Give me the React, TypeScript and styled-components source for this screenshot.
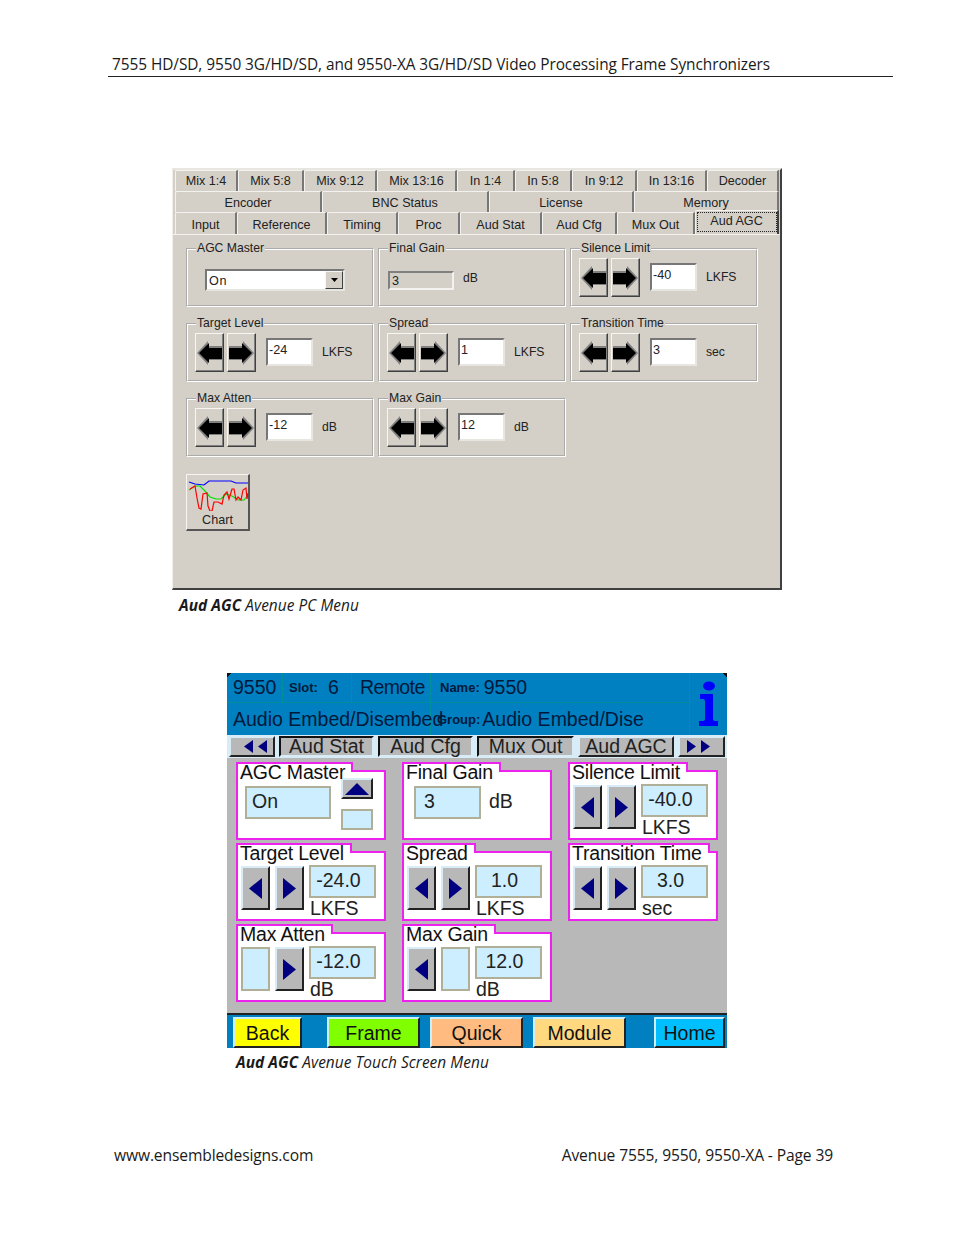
import React from 'react';
import styled, { createGlobalStyle } from 'styled-components';

const GlobalStyle = createGlobalStyle`
  html, body {
    margin: 0;
    background: #fff;
  }
`;

const Page = styled.div`
  width: 954px;
  height: 1235px;
  overflow: hidden;
  font-family: 'Open Sans', 'Noto Sans', sans-serif;
  color: #1a1a1a;
`;

const RunningHead = styled.div`
  width: 781px;
  height: 76px;
  margin-left: 108px;
  padding-left: 4px;
  border-bottom: 1px solid #222;
  display: flex;
  align-items: flex-end;
  font-size: 15.4px;
  line-height: 22px;
  letter-spacing: -0.06px;
`;

const Caption = styled.div<{ $left: number; $top: number }>`
  margin-left: ${(p) => p.$left}px;
  margin-top: ${(p) => p.$top}px;
  height: 20px;
  font-size: 15.4px;
  line-height: 20px;
  font-style: italic;
  letter-spacing: 0.06px;
  b {
    font-weight: 700;
  }
`;

const Footer = styled.div`
  margin: 72px 0 0 114px;
  width: 719px;
  display: flex;
  justify-content: space-between;
  font-size: 15.6px;
  line-height: 20px;
  letter-spacing: -0.12px;
`;

/* ---------- PC menu ---------- */

const PcPanel = styled.div`
  width: 610px;
  height: 422px;
  margin: 91px 0 0 172px;
  box-sizing: border-box;
  background: #d4d0c8;
  border-top: 2px solid #e8e6e0;
  border-left: 1px solid #f0eee8;
  border-right: 2px solid #404040;
  border-bottom: 2px solid #404040;
  font-family: 'Liberation Sans', Arial, sans-serif;
  font-size: 12.6px;
  color: #222;
`;

const PcTabRow = styled.div<{ $h: number }>`
  display: flex;
  height: ${(p) => p.$h}px;
  padding-left: 2px;
`;

const PcTab = styled.div<{ $w: number; $nudge?: boolean; $active?: boolean }>`
  width: ${(p) => p.$w}px;
  box-sizing: border-box;
  background: #d4d0c8;
  border-top: 1px solid #f4f2ee;
  border-left: 1px solid #f4f2ee;
  border-right: 2px solid #777;
  border-top-left-radius: 2px;
  display: flex;
  align-items: center;
  justify-content: center;
  line-height: 20px;
  padding-top: ${(p) => (p.$nudge ? 2 : 0)}px;
  ${(p) =>
    p.$active &&
    `
    height: 24px;
    margin-top: -2px;
    align-items: flex-start;
    padding-top: 2px;
    border-right-color: #404040;
    span {
      outline: 1px dotted #222;
      width: ${p.$w - 6}px;
      height: 18px;
      text-align: center;
      line-height: 17px;
    }
  `}
`;

const PcBody = styled.div`
  border-top: 1px solid #f4f2ee;
  padding: 6px 0 0 13px;
`;

const PcGrid = styled.div`
  display: grid;
  grid-template-columns: repeat(3, 188px);
  grid-auto-rows: 66px;
  column-gap: 4px;
  row-gap: 9px;
`;

const PcGroup = styled.fieldset`
  margin: 0;
  min-width: 0;
  box-sizing: border-box;
  padding: 2px 0 0 7px;
  border: 2px groove #ffffff;
  display: flex;
  align-items: flex-start;
`;

const PcLegend = styled.legend`
  margin-left: 1px;
  padding: 0 1px;
  line-height: 15px;
  font-size: 12.2px;
  white-space: nowrap;
`;

const ArrowButton = styled.div`
  width: 29px;
  height: 39px;
  box-sizing: border-box;
  margin-right: 3px;
  background: #d4d0c8;
  border-top: 1px solid #f8f6f2;
  border-left: 1px solid #f8f6f2;
  border-right: 1px solid #404040;
  border-bottom: 1px solid #404040;
  box-shadow: inset -1px -1px 0 #808080;
  display: flex;
  align-items: center;
  justify-content: center;
`;

const PcInput = styled.div`
  width: 47px;
  height: 28px;
  margin: 5px 9px 0 7px;
  box-sizing: border-box;
  padding-left: 1px;
  background: #fff;
  border: 2px solid;
  border-color: #777 #e8e6e0 #e8e6e0 #777;
  line-height: 21px;
`;

const PcUnit = styled.div`
  margin-top: 11px;
  line-height: 16px;
  font-size: 12.2px;
`;

const PcSelect = styled.div`
  width: 140px;
  height: 22px;
  margin: 11px 0 0 10px;
  box-sizing: border-box;
  background: #fff;
  border: 2px solid;
  border-color: #777 #e8e6e0 #e8e6e0 #777;
  display: flex;
  justify-content: space-between;
  padding-left: 2px;
  line-height: 20px;
  letter-spacing: 0.6px;
`;

const PcDrop = styled.div`
  width: 16px;
  background: #d4d0c8;
  border-top: 1px solid #f8f6f2;
  border-left: 1px solid #f8f6f2;
  border-right: 1px solid #404040;
  border-bottom: 1px solid #404040;
  display: flex;
  align-items: center;
  justify-content: center;
`;

const PcDisabled = styled.div`
  width: 66px;
  height: 19px;
  margin: 13px 9px 0 1px;
  box-sizing: border-box;
  padding-left: 2px;
  border: 2px solid;
  border-color: #808080 #f4f2ee #f4f2ee #808080;
  line-height: 17px;
`;

const PcDisabledUnit = styled(PcUnit)`
  margin-top: 12px;
`;

const ChartButton = styled.div`
  width: 64px;
  height: 57px;
  margin-top: 17px;
  box-sizing: border-box;
  background: #d4d0c8;
  border-top: 1px solid #f8f6f2;
  border-left: 1px solid #f8f6f2;
  border-right: 2px solid #555;
  border-bottom: 2px solid #555;
  display: flex;
  flex-direction: column;
  align-items: center;
  padding-top: 3px;
  line-height: 16px;
  svg {
    display: block;
    margin-bottom: 1px;
  }
`;

/* ---------- touch screen menu ---------- */

const TouchPanel = styled.div`
  width: 500px;
  height: 375px;
  margin: 57px 0 0 227px;
  background: #b8b8b8;
  font-family: 'Liberation Sans', Arial, sans-serif;
  font-size: 19.5px;
  color: #111;
`;

const TouchHead = styled.div`
  height: 62px;
  background:
    linear-gradient(135deg, #111 3px, transparent 3px),
    linear-gradient(-135deg, #111 3px, transparent 3px),
    #0080c0;
  color: #00183c;
  display: grid;
  grid-template-columns: 462px 38px;
`;

const HeadRows = styled.div`
  display: flex;
  flex-direction: column;
`;

const HeadRow = styled.div<{ $h: number }>`
  height: ${(p) => p.$h}px;
  display: flex;
  box-sizing: border-box;
  border-bottom: 1px solid #00909c;
  &:last-child {
    border-bottom: 0;
    padding-top: 1px;
  }
`;

const HeadCell = styled.div<{ $w?: number }>`
  width: ${(p) => (p.$w ? `${p.$w}px` : 'auto')};
  flex: ${(p) => (p.$w ? '0 0 auto' : 1)};
  box-sizing: border-box;
  padding-left: ${(p) => (p.$w ? 6 : 9)}px;
  border-right: 1px solid #00909c;
  display: flex;
  align-items: center;
  white-space: nowrap;
  &:last-child {
    border-right: 0;
  }
`;

const SmallLabel = styled.span`
  font-size: 13px;
  font-weight: 700;
  margin-right: 4px;
`;

const GroupCell = styled(HeadCell)`
  padding-left: 3px;
  ${SmallLabel} {
    margin-right: 2px;
    margin-left: 3px;
  }
`;

const SlotValue = styled.span`
  margin-left: 6px;
`;

const RemoteText = styled.span`
  margin-left: 2px;
  letter-spacing: -0.6px;
`;

const InfoCell = styled.div`
  border-left: 1px solid #00909c;
  display: flex;
  align-items: center;
  justify-content: center;
`;

const TouchTabs = styled.div`
  height: 23px;
  padding: 1px 1px 0 2px;
  background: #d8ecf8;
  display: flex;
  gap: 4px;
  box-sizing: border-box;
`;

const TouchTab = styled.div<{ $w: number; $selected?: boolean }>`
  width: ${(p) => p.$w}px;
  height: 21px;
  box-sizing: border-box;
  background: #b8b8b8;
  display: flex;
  align-items: center;
  justify-content: center;
  gap: 5px;
  color: #222;
  border-style: solid;
  border-width: 2px;
  border-color: ${(p) =>
    p.$selected ? '#d8ecf8 #222 #222 #d8ecf8' : '#111 #d8ecf8 #d8ecf8 #111'};
`;

const ScrollTab = styled(TouchTab)<{ $side: 'left' | 'right' }>`
  padding-${(p) => p.$side}: 6px;
`;

const TouchGrid = styled.div`
  height: 255px;
  box-sizing: border-box;
  padding: 4px 0 0 9px;
  display: grid;
  grid-template-columns: repeat(3, 150px);
  grid-auto-rows: 78px;
  column-gap: 16px;
  row-gap: 3px;
`;

const TouchGroup = styled.div`
  display: flex;
  flex-direction: column;
  align-items: flex-start;
`;

const GroupTitle = styled.div`
  position: relative;
  z-index: 1;
  height: 8px;
  padding: 0 6px 0 2px;
  margin-bottom: -2px;
  background: #fff;
  border: 2px solid #ee22ee;
  border-bottom: 0;
  line-height: 17px;
  white-space: nowrap;
  letter-spacing: -0.2px;
`;

const GroupBody = styled.div`
  align-self: stretch;
  flex: 1;
  box-sizing: border-box;
  background: #fff;
  border: 2px solid #ee22ee;
  padding: 13px 0 0 3px;
  display: flex;
  align-items: flex-start;
`;

const StepButton = styled.div<{ $blank?: boolean }>`
  width: 29px;
  height: 44px;
  margin-right: 5px;
  box-sizing: border-box;
  display: flex;
  align-items: center;
  justify-content: center;
  ${(p) =>
    p.$blank
      ? `
    background: #cceeff;
    border: 2px solid #b0b098;
  `
      : `
    background: #b8b8b8;
    border-style: solid;
    border-width: 2px;
    border-color: #d8ecf8 #222 #222 #d8ecf8;
  `}
`;

const ValueColumn = styled.div`
  display: flex;
  flex-direction: column;
  margin-top: -1px;
`;

const ValueBox = styled.div<{ $w?: number }>`
  width: ${(p) => p.$w ?? 67}px;
  height: 33px;
  box-sizing: border-box;
  padding: 0 8px 2px 0;
  background: #cceeff;
  border: 2px solid #b0b098;
  display: flex;
  align-items: center;
  justify-content: center;
  color: #222;
`;

const ValueUnit = styled.div`
  line-height: 21px;
  padding-left: 1px;
  letter-spacing: -0.1px;
  color: #222;
`;

const PlainRow = styled.div`
  display: flex;
  align-items: flex-start;
  padding: 1px 0 0 7px;
  gap: 8px;
`;

const LeftValue = styled(ValueBox)`
  justify-content: flex-start;
  padding: 0 0 2px 8px;
`;

const PlainUnit = styled.div`
  line-height: 30px;
  color: #222;
`;

const MasterRow = styled.div`
  display: flex;
  align-items: flex-start;
  padding: 1px 0 0 4px;
  gap: 10px;
`;

const MasterValue = styled(LeftValue)`
  padding-left: 5px;
`;

const MasterSide = styled.div`
  margin-top: -8px;
  display: flex;
  flex-direction: column;
  gap: 10px;
`;

const MasterUp = styled.div`
  width: 32px;
  height: 21px;
  box-sizing: border-box;
  background: #b8b8b8;
  border-style: solid;
  border-width: 2px;
  border-color: #d8ecf8 #222 #222 #d8ecf8;
  display: flex;
  align-items: center;
  justify-content: center;
`;

const MasterBlank = styled.div`
  width: 32px;
  height: 21px;
  box-sizing: border-box;
  background: #cceeff;
  border: 2px solid #b0b098;
`;

const TouchBar = styled.div`
  height: 35px;
  box-sizing: border-box;
  background: #0080c0;
  border-top: 2px solid #222;
  padding-top: 2px;
  display: flex;
`;

const BarButton = styled.div<{ $w: number; $gap: number; $bg: string }>`
  width: ${(p) => p.$w}px;
  margin-left: ${(p) => p.$gap}px;
  height: 31px;
  box-sizing: border-box;
  padding-top: 1px;
  background: ${(p) => p.$bg};
  border-style: solid;
  border-width: 2px;
  border-color: #cceeff #222 #222 #cceeff;
  display: flex;
  align-items: center;
  justify-content: center;
  color: #111;
`;

/* ---------- drawings ---------- */

const BigArrow = ({ right }: { right?: boolean }) => (
  <svg width="25" height="24" viewBox="0 0 25 24" style={right ? { transform: 'scaleX(-1)' } : undefined}>
    <polygon points="0,12 11,0 11,5 25,5 25,19 11,19 11,24" fill="#808080" />
    <polygon points="2,12 12,2 12,7 25,7 25,18 12,18 12,22" fill="#000" />
  </svg>
);

const Triangle = ({ dir, w, h }: { dir: 'left' | 'right' | 'up' | 'down'; w: number; h: number }) => {
  const pts = {
    left: `${w},0 ${w},${h} 0,${h / 2}`,
    right: `0,0 0,${h} ${w},${h / 2}`,
    up: `0,${h} ${w},${h} ${w / 2},0`,
    down: `0,0 ${w},0 ${w / 2},${h}`,
  }[dir];
  return (
    <svg width={w} height={h} viewBox={`0 0 ${w} ${h}`}>
      <polygon points={pts} fill="#000080" />
    </svg>
  );
};

const ChartIcon = () => (
  <svg width="60" height="33" viewBox="0 0 60 33" fill="none" strokeWidth="1.2">
    <polyline points="1,4 7,6 16,7 21,3 43,3 48,5 60,5" stroke="#0000ff" />
    <polyline points="1,12 7,8 12,8 17,13 22,19 28,21 33,21 38,16 44,18 50,22 56,22 60,17" stroke="#00e000" />
    <polyline
      points="2,11 7,8 9,20 11,30 13,31 15,16 19,15 20,28 22,33 24,33 26,24 30,24 34,26 36,17 39,14 41,21 44,11 46,11 48,22 50,19 53,22 55,12 58,10 59,21 60,15"
      stroke="#ff0000"
    />
  </svg>
);

const InfoIcon = () => (
  <svg width="20" height="46" viewBox="0 0 20 46">
    <ellipse cx="10" cy="5" rx="6" ry="4.5" fill="#0000ff" />
    <path
      d="M1 13 H14 V38 Q14 40 16 40 H19 V45 H0 V40 H4 Q6 40 6 38 V20 Q6 18 4 18 H1 Z"
      fill="#0000ff"
    />
  </svg>
);

/* ---------- data ---------- */

const tabRows = [
  [
    ['Mix 1:4', 63], ['Mix 5:8', 66], ['Mix 9:12', 73], ['Mix 13:16', 80], ['In 1:4', 58],
    ['In 5:8', 57], ['In 9:12', 65], ['In 13:16', 70], ['Decoder', 72],
  ],
  [['Encoder', 147], ['BNC Status', 167], ['License', 145], ['Memory', 145]],
  [
    ['Input', 62], ['Reference', 90], ['Timing', 71], ['Proc', 62], ['Aud Stat', 82],
    ['Aud Cfg', 75], ['Mux Out', 78], ['Aud AGC', 84],
  ],
] as [string, number][][];

const PcStepper = ({ title, value, unit }: { title: string; value: string; unit: string }) => (
  <PcGroup>
    <PcLegend>{title}</PcLegend>
    <ArrowButton>
      <BigArrow />
    </ArrowButton>
    <ArrowButton>
      <BigArrow right />
    </ArrowButton>
    <PcInput>{value}</PcInput>
    <PcUnit>{unit}</PcUnit>
  </PcGroup>
);

const TouchStepper = ({
  title,
  value,
  unit,
  noLeft,
  noRight,
}: {
  title: string;
  value: string;
  unit: string;
  noLeft?: boolean;
  noRight?: boolean;
}) => (
  <TouchGroup>
    <GroupTitle>{title}</GroupTitle>
    <GroupBody>
      <StepButton $blank={noLeft}>{!noLeft && <Triangle dir="left" w={13} h={21} />}</StepButton>
      <StepButton $blank={noRight}>{!noRight && <Triangle dir="right" w={13} h={21} />}</StepButton>
      <ValueColumn>
        <ValueBox>{value}</ValueBox>
        <ValueUnit>{unit}</ValueUnit>
      </ValueColumn>
    </GroupBody>
  </TouchGroup>
);

export default function App() {
  return (
    <Page>
      <GlobalStyle />
      <RunningHead>7555 HD/SD, 9550 3G/HD/SD, and 9550-XA 3G/HD/SD Video Processing Frame Synchronizers</RunningHead>

      <PcPanel>
        {tabRows.map((row, i) => (
          <PcTabRow key={i} $h={i === 2 ? 22 : 21}>
            {row.map(([label, w]) => (
              <PcTab key={label} $w={w} $nudge={i > 0} $active={label === 'Aud AGC'}>
                <span>{label}</span>
              </PcTab>
            ))}
          </PcTabRow>
        ))}
        <PcBody>
          <PcGrid>
            <PcGroup>
              <PcLegend>AGC Master</PcLegend>
              <PcSelect>
                On
                <PcDrop>
                  <svg width="7" height="4" viewBox="0 0 7 4">
                    <polygon points="0,0 7,0 3.5,4" fill="#000" />
                  </svg>
                </PcDrop>
              </PcSelect>
            </PcGroup>
            <PcGroup>
              <PcLegend>Final Gain</PcLegend>
              <PcDisabled>3</PcDisabled>
              <PcDisabledUnit>dB</PcDisabledUnit>
            </PcGroup>
            <PcStepper title="Silence Limit" value="-40" unit="LKFS" />
            <PcStepper title="Target Level" value="-24" unit="LKFS" />
            <PcStepper title="Spread" value="1" unit="LKFS" />
            <PcStepper title="Transition Time" value="3" unit="sec" />
            <PcStepper title="Max Atten" value="-12" unit="dB" />
            <PcStepper title="Max Gain" value="12" unit="dB" />
          </PcGrid>
          <ChartButton>
            <ChartIcon />
            Chart
          </ChartButton>
        </PcBody>
      </PcPanel>
      <Caption $left={179} $top={6}>
        <b>Aud AGC</b> Avenue PC Menu
      </Caption>

      <TouchPanel>
        <TouchHead>
          <HeadRows>
            <HeadRow $h={30}>
              <HeadCell $w={56}>9550</HeadCell>
              <HeadCell $w={69}>
                <SmallLabel>Slot:</SmallLabel>
                <SlotValue>6</SlotValue>
              </HeadCell>
              <HeadCell $w={79}>
                <RemoteText>Remote</RemoteText>
              </HeadCell>
              <HeadCell>
                <SmallLabel>Name:</SmallLabel>9550
              </HeadCell>
            </HeadRow>
            <HeadRow $h={32}>
              <HeadCell $w={204}>Audio Embed/Disembed</HeadCell>
              <GroupCell>
                <SmallLabel>Group:</SmallLabel>Audio Embed/Dise
              </GroupCell>
            </HeadRow>
          </HeadRows>
          <InfoCell>
            <InfoIcon />
          </InfoCell>
        </TouchHead>
        <TouchTabs>
          <ScrollTab $w={46} $selected $side="left">
            <Triangle dir="left" w={9} h={13} />
            <Triangle dir="left" w={9} h={13} />
          </ScrollTab>
          <TouchTab $w={95}>Aud Stat</TouchTab>
          <TouchTab $w={95}>Aud Cfg</TouchTab>
          <TouchTab $w={97}>Mux Out</TouchTab>
          <TouchTab $w={96} $selected>
            Aud AGC
          </TouchTab>
          <ScrollTab $w={47} $selected $side="right">
            <Triangle dir="right" w={9} h={13} />
            <Triangle dir="right" w={9} h={13} />
          </ScrollTab>
        </TouchTabs>
        <TouchGrid>
          <TouchGroup>
            <GroupTitle>AGC Master</GroupTitle>
            <GroupBody>
              <MasterRow>
                <MasterValue $w={86}>On</MasterValue>
                <MasterSide>
                  <MasterUp>
                    <Triangle dir="up" w={24} h={12} />
                  </MasterUp>
                  <MasterBlank />
                </MasterSide>
              </MasterRow>
            </GroupBody>
          </TouchGroup>
          <TouchGroup>
            <GroupTitle>Final Gain</GroupTitle>
            <GroupBody>
              <PlainRow>
                <LeftValue>3</LeftValue>
                <PlainUnit>dB</PlainUnit>
              </PlainRow>
            </GroupBody>
          </TouchGroup>
          <TouchStepper title="Silence Limit" value="-40.0" unit="LKFS" />
          <TouchStepper title="Target Level" value="-24.0" unit="LKFS" />
          <TouchStepper title="Spread" value="1.0" unit="LKFS" />
          <TouchStepper title="Transition Time" value="3.0" unit="sec" />
          <TouchStepper title="Max Atten" value="-12.0" unit="dB" noLeft />
          <TouchStepper title="Max Gain" value="12.0" unit="dB" noRight />
        </TouchGrid>
        <TouchBar>
          <BarButton $w={69} $gap={6} $bg="#ffff00">Back</BarButton>
          <BarButton $w={93} $gap={25} $bg="#80ff00">Frame</BarButton>
          <BarButton $w={93} $gap={10} $bg="#ffbb80">Quick</BarButton>
          <BarButton $w={93} $gap={10} $bg="#ffd880">Module</BarButton>
          <BarButton $w={71} $gap={28} $bg="#00bfff">Home</BarButton>
        </TouchBar>
      </TouchPanel>
      <Caption $left={236} $top={5}>
        <b>Aud AGC</b> Avenue Touch Screen Menu
      </Caption>

      <Footer>
        <span>www.ensembledesigns.com</span>
        <span>Avenue 7555, 9550, 9550-XA - Page 39</span>
      </Footer>
    </Page>
  );
}
